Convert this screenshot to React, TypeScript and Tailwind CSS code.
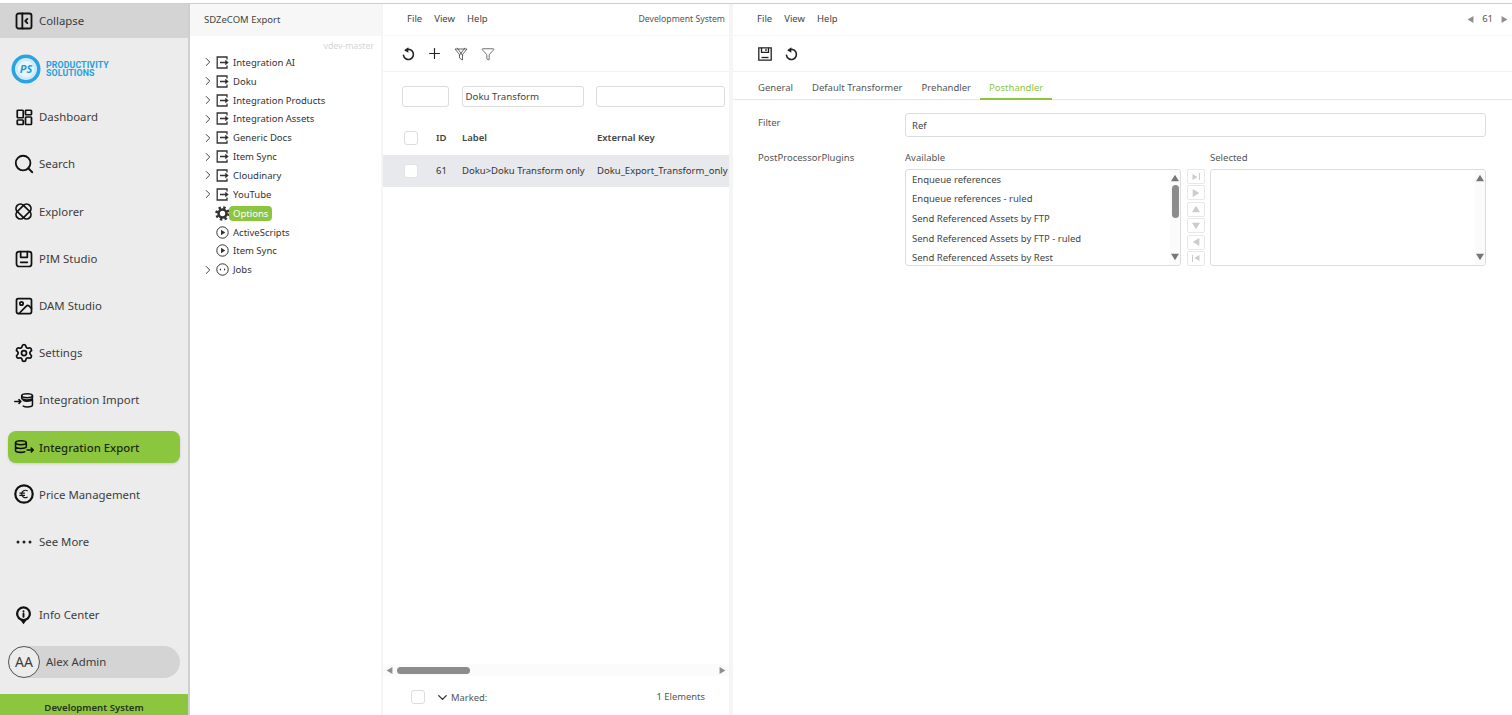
import React from "react";
import { ChevronRight, ChevronDown, Search, Settings, Plus, Funnel, Image } from "lucide-react";

const Sv = ({ s = 20, sw = 1.8, children }: { s?: number; sw?: number; children: React.ReactNode }) => (
  <svg width={s} height={s} viewBox="0 0 24 24" fill="none" stroke="currentColor" strokeWidth={sw} strokeLinecap="round" strokeLinejoin="round">{children}</svg>
);

const CollapseI = () => <Sv s={20} sw={2.2}><rect x="3" y="3" width="18" height="18" rx="2.5" /><path d="M10 3v18M16 9.500 13.500 12l2.500 2.500" /></Sv>;
const DashI = () => <Sv s={18} sw={2.3}><rect x="3" y="3" width="8" height="10" rx="1" /><rect x="14" y="3" width="8" height="6" rx="1" /><rect x="3" y="16" width="8" height="6" rx="1" /><rect x="14" y="12" width="8" height="10" rx="1" /></Sv>;
const ExplorerI = () => <Sv s={21} sw={2}><rect x="2" y="7" width="20" height="10" rx="5" transform="rotate(45 12 12)" /><rect x="2" y="7" width="20" height="10" rx="5" transform="rotate(-45 12 12)" /></Sv>;
const PimI = () => <Sv s={20} sw={2.1}><rect x="3" y="3" width="18" height="18" rx="3" /><path d="M8 3v7h8V3M8 16h8" /></Sv>;
const DotsI = () => (
  <svg width="16" height="4" viewBox="0 0 16 4" fill="#222"><circle cx="2" cy="2" r="1.500" /><circle cx="8" cy="2" r="1.500" /><circle cx="14" cy="2" r="1.500" /></svg>
);
const DbI = ({ flip }: { flip?: boolean }) => flip ? (
  <svg width="20" height="16" viewBox="0 0 26 20" fill="none" stroke="currentColor" strokeWidth="2" strokeLinecap="round" strokeLinejoin="round">
    <path d="M1 12h8M6.500 9.500 9 12l-2.500 2.500" />
    <ellipse cx="17" cy="4.500" rx="7" ry="2.500" /><path d="M10 4.500v3c0 1 2 2.500 7 2.500s7-1.500 7-2.500v-3M12 10.500c1.500.8 3 1 5 1s5.500-.5 7-2v7c0 1.500-3 2.500-7 2.500-2 0-3.500-.3-5-1" />
  </svg>
) : (
  <svg width="20" height="16" viewBox="0 0 26 20" fill="none" stroke="currentColor" strokeWidth="2" strokeLinecap="round" strokeLinejoin="round">
    <ellipse cx="9" cy="4.500" rx="7" ry="2.500" /><path d="M2 4.500v10c0 1.500 3 2.500 7 2.500 2 0 3.500-.2 5-.8M2 9.500c0 1.500 3 2.500 7 2.500s7-1 7-2.500v-5" />
    <path d="M17 14h8M22.500 11.500 25 14l-2.500 2.500" />
  </svg>
);
const EuroI = () => <Sv s={22} sw={2.4}><circle cx="12" cy="12" r="9.500" /><path d="M15.500 8.500a4 4 0 0 0-6 3.500 4 4 0 0 0 6 3.500M7.500 11h5M7.500 13.500h5" strokeWidth="1.300" /></Sv>;
const InfoI = () => <Sv s={21} sw={2.2}><path d="M12 23 9 19a8.500 8.500 0 1 1 6 0z" fill="currentColor" stroke="none" /><circle cx="12" cy="11" r="6" fill="#ececec" stroke="none" /><path d="M12 8.300v.2M12 11v3.500" /></Sv>;

const ExportI = () => (
  <svg width="13" height="13" viewBox="0 0 13 13" fill="none" stroke="currentColor" strokeWidth="1.300" className="shrink-0">
    <path d="M11 3.500V1H1.200v11H11V9.500" /><path d="M4 6.500h7.500M9.300 4.500 11.500 6.500 9.300 8.500" strokeWidth="1.500" />
  </svg>
);
const CircleI = ({ dots }: { dots?: boolean }) => (
  <svg width="13" height="13" viewBox="0 0 13 13" className="shrink-0">
    <circle cx="6.500" cy="6.500" r="5.700" fill="none" stroke="currentColor" strokeWidth="1" />
    {dots ? <path d="M3.500 6.500l1.500-1.300v2.600zM9.500 6.500 8 5.200v2.600z" fill="currentColor" /> : <path d="M5 3.800 9.300 6.500 5 9.200z" fill="currentColor" />}
  </svg>
);
const GearI = () => (
  <svg width="15" height="15" viewBox="0 0 14 14" fill="none" stroke="#333" className="shrink-0">
    <circle cx="7" cy="7" r="5.600" strokeWidth="2.400" strokeDasharray="2.200 2.200" />
    <circle cx="7" cy="7" r="3.700" strokeWidth="2.400" />
  </svg>
);
const RefreshI = () => (
  <svg width="13" height="14" viewBox="0 0 13 14" fill="none" className="shrink-0">
    <path d="M3.600 3.300A5 5 0 1 1 1.500 8.300" stroke="#222" strokeWidth="1.600" strokeLinecap="round" />
    <path d="M6.300 .3v5.400L2.400 3.300z" fill="#222" />
  </svg>
);
const SaveI = () => (
  <svg width="14" height="14" viewBox="0 0 14 14" fill="none" stroke="#222" strokeWidth="1.300" className="shrink-0">
    <path d="M.8.800h12.400v12.400H.8z" /><path d="M3.500 .8v4.500h7V.8M8 2v2" /><path d="M3.500 10.500h7" />
  </svg>
);
const FilterOff = () => (
  <svg width="14" height="14" viewBox="0 0 14 14" fill="none" stroke="#555" strokeWidth=".9"><path d="M1 2h12L8.500 7.500V13L5.500 11V7.500zM3 .8l6 8.200M11 .8 5 9" /></svg>
);
const Tri = ({ d, c = "#8f8f8f", s = 6 }: { d: "u" | "d" | "l" | "r"; c?: string; s?: number }) => {
  const m = { u: "3,0.500 6,5.500 0,5.500", d: "0,0.500 6,0.500 3,5.500", l: "5.500,0 5.500,6 0.500,3", r: "0.500,0 0.500,6 5.500,3" }[d];
  return <svg width={s} height={s} viewBox="0 0 6 6" className="shrink-0"><polygon points={m} fill={c} /></svg>;
};

const nav: [string, React.ReactNode][] = [
  ["Dashboard", <DashI />],
  ["Search", <Search size={22} strokeWidth={2} />],
  ["Explorer", <ExplorerI />],
  ["PIM Studio", <PimI />],
  ["DAM Studio", <Image size={20} strokeWidth={2.1} />],
  ["Settings", <Settings size={20} strokeWidth={2.1} />],
  ["Integration Import", <DbI flip />],
  ["Integration Export", <DbI />],
  ["Price Management", <EuroI />],
  ["See More", <DotsI />],
];

const NavRow = ({ label, icon, active }: { label: string; icon: React.ReactNode; active?: boolean }) => (
  <div className="flex h-[47.2px] shrink-0 items-center px-2">
    <div className={`flex h-[32px] w-[172px] items-center rounded-lg ${active ? "bg-[#8cc63f] font-medium text-[#1c2a10] shadow-sm" : "text-[#3c3c3c]"}`}>
      <div className="flex w-[31px] shrink-0 justify-center text-[#111]">{icon}</div>
      <span className="text-[11.4px] leading-none">{label}</span>
    </div>
  </div>
);

const Sidebar = () => (
  <aside className="flex h-full w-[190px] shrink-0 flex-col border-r-2 border-[#cfcfcf] bg-[#ececec]">
    <div className="flex h-[34px] shrink-0 items-center bg-[#d4d4d4] pl-2 text-[#3c3c3c]">
      <div className="flex w-[31px] justify-center text-[#111]"><CollapseI /></div>
      <span className="text-[11.4px] leading-[16px]">Collapse</span>
    </div>
    <div className="flex h-[55.4px] shrink-0 items-center pl-[11px] pt-[7px]">
      <svg width="30" height="30" viewBox="0 0 30 30" className="shrink-0">
        <circle cx="15" cy="15" r="14.500" fill="#29a3e2" />
        <circle cx="15" cy="15" r="11" fill="#cfeafa" />
        <circle cx="15" cy="15" r="8" fill="#e9f6fd" />
        <text x="15" y="19" textAnchor="middle" fontSize="11" fontWeight="700" fontStyle="italic" fontFamily="'Noto Sans', sans-serif" fill="#1d9be0">PS</text>
      </svg>
      <div className="ml-[5px] font-['Roboto',sans-serif] text-[8.8px] font-bold leading-[8px] tracking-[0.1px] text-[#1da1e2]">
        <div>PRODUCTIVITY</div>
        <div>SOLUTIONS</div>
      </div>
    </div>
    {nav.map(([l, i]) => <NavRow key={l} label={l} icon={i} active={l === "Integration Export"} />)}
    <div className="h-[25.8px] shrink-0" />
    <NavRow label="Info Center" icon={<InfoI />} />
    <div className="flex h-[47.2px] shrink-0 items-center px-2">
      <div className="flex h-[32px] w-[172px] items-center rounded-full bg-[#d4d4d4] text-[#3c3c3c]">
        <div className="flex h-[32px] w-[32px] shrink-0 items-center justify-center rounded-full border border-[#555] bg-[#ececec] text-[14px]">AA</div>
        <span className="ml-[6px] text-[11.4px] leading-none">Alex Admin</span>
      </div>
    </div>
    <div className="mt-auto flex h-[21px] shrink-0 items-end justify-center bg-[#8cc63f] text-[9.6px] font-semibold leading-[14px] text-[#26331a]">Development System</div>
  </aside>
);

const tree: { l: string; t: "e" | "g" | "p" | "j"; c?: boolean; sel?: boolean }[] = [
  { l: "Integration AI", t: "e", c: true },
  { l: "Doku", t: "e", c: true },
  { l: "Integration Products", t: "e", c: true },
  { l: "Integration Assets", t: "e", c: true },
  { l: "Generic Docs", t: "e", c: true },
  { l: "Item Sync", t: "e", c: true },
  { l: "Cloudinary", t: "e", c: true },
  { l: "YouTube", t: "e", c: true },
  { l: "Options", t: "g", sel: true },
  { l: "ActiveScripts", t: "p" },
  { l: "Item Sync", t: "p" },
  { l: "Jobs", t: "j", c: true },
];

const TreePanel = () => (
  <section className="flex h-full w-[193px] shrink-0 flex-col border-r-2 border-[#f5f5f5] bg-white">
    <div className="flex h-[32px] shrink-0 items-center bg-[#f7f7f7] pl-[14px] text-[9.5px] text-[#444]">SDZeCOM Export</div>
    <div className="flex h-[17px] items-end justify-end pr-[7px] text-[8.7px] leading-[14px] text-[#d4d4d4]">vdev-master</div>
    <div className="flex flex-col pl-[14px]">
      {tree.map((r, i) => (
        <div key={i} className="flex h-[18.85px] items-center text-[#333]">
          <div className="flex w-[11px] shrink-0 justify-start">{r.c && <ChevronRight size={14} strokeWidth={1.6} className="-ml-[3px] text-[#333]" />}</div>
          <div className="flex w-[15px] shrink-0 justify-center">
            {r.t === "e" && <ExportI />}
            {r.t === "g" && <GearI />}
            {r.t === "p" && <CircleI />}
            {r.t === "j" && <CircleI dots />}
          </div>
          <span className={`text-[9.5px] leading-[15px] ${r.sel ? "-ml-[1px] rounded-sm bg-[#8cc63f] px-[4px] text-white" : "ml-[3px]"}`}>{r.l}</span>
        </div>
      ))}
    </div>
  </section>
);

const Menu = () => (
  <div className="flex gap-[12px] text-[9.5px] text-[#444]"><span>File</span><span>View</span><span>Help</span></div>
);

const Box = ({ className = "", children }: { className?: string; children?: React.ReactNode }) => (
  <div className={`rounded-[3px] border border-[#dcdcdc] bg-white ${className}`}>{children}</div>
);

const Tool = ({ children }: { children: React.ReactNode }) => (
  <div className="flex w-[26.5px] shrink-0 justify-center">{children}</div>
);

const ListPanel = () => (
  <section className="flex h-full w-[346px] shrink-0 flex-col bg-white">
    <div className="flex h-[32px] shrink-0 items-center justify-between border-b border-[#f7f7f7] pl-[24px] pr-[4px]">
      <Menu />
      <span className="text-[8.7px] text-[#555]">Development System</span>
    </div>
    <div className="flex h-[36px] shrink-0 items-center border-b border-[#f3f3f3] pl-[12px] text-[#222]">
      <Tool><RefreshI /></Tool>
      <Tool><Plus size={17} strokeWidth={1.6} /></Tool>
      <Tool><FilterOff /></Tool>
      <Tool><Funnel size={14} strokeWidth={1.1} /></Tool>
    </div>
    <div className="flex shrink-0 gap-[12.5px] pl-[19px] pt-[14px]">
      <Box className="h-[21px] w-[47px]" />
      <Box className="flex h-[21px] w-[122px] items-center pl-[3px] pt-[1px] text-[9.7px] text-[#444]">Doku Transform</Box>
      <Box className="h-[21px] w-[129px]" />
    </div>
    <div className="flex h-[48px] shrink-0 items-end whitespace-nowrap pb-[9px] text-[9.5px] font-semibold leading-[16px] text-[#444]">
      <span className="mb-[1px] ml-[21px] block h-[14px] w-[14px] shrink-0 rounded-[3px] border border-[#ddd] bg-white" />
      <span className="ml-[18px] w-[26px] shrink-0">ID</span>
      <span className="w-[135px] shrink-0">Label</span>
      <span>External Key</span>
    </div>
    <div className="flex h-[32px] shrink-0 items-center whitespace-nowrap bg-[#e8e9ec] text-[9.5px] text-[#333]">
      <span className="ml-[21px] block h-[14px] w-[14px] shrink-0 rounded-[3px] border border-[#e3e3e3] bg-white" />
      <span className="ml-[18px] w-[26px] shrink-0">61</span>
      <span className="w-[135px] shrink-0">Doku&gt;Doku Transform only</span>
      <span>Doku_Export_Transform_only</span>
    </div>
    <div className="flex-1" />
    <div className="flex h-[12px] shrink-0 items-center justify-between bg-[#fbfbfb] px-[3px]">
      <Tri d="l" s={7} />
      <div className="ml-[4px] mr-auto h-[7px] w-[73px] rounded-full bg-[#8c8c8c]" />
      <Tri d="r" s={7} />
    </div>
    <div className="flex h-[39px] shrink-0 items-start pt-[14px] text-[#555]">
      <span className="ml-[28px] block h-[14px] w-[14px] shrink-0 rounded-[3px] border border-[#ddd] bg-white" />
      <ChevronDown size={15} strokeWidth={2.2} className="ml-[10px] text-[#333]" />
      <span className="ml-[1px] text-[9.4px] leading-[15px]">Marked:</span>
      <span className="ml-auto mr-[24px] text-[9.4px] leading-[13px]">1 Elements</span>
    </div>
  </section>
);

const items = ["Enqueue references", "Enqueue references - ruled", "Send Referenced Assets by FTP", "Send Referenced Assets by FTP - ruled", "Send Referenced Assets by Rest"];
const Bar = ({ thumb }: { thumb?: boolean }) => (
  <div className="flex w-[10px] shrink-0 flex-col items-center justify-between bg-[#fbfbfb] py-[4px]">
    <Tri d="u" c="#777" s={8} />
    {thumb && <div className="mb-auto mt-[3px] h-[33px] w-[7px] rounded-full bg-[#8c8c8c]" />}
    <Tri d="d" c="#777" s={8} />
  </div>
);

const MoveBtn = ({ children }: { children: React.ReactNode }) => (
  <div className="flex h-[15px] w-[18px] items-center justify-center rounded-[2px] border border-[#e8e8e8] bg-white">{children}</div>
);

const DetailPanel = () => (
  <section className="flex h-full flex-1 flex-col border-l-4 border-[#f5f5f5] bg-white">
    <div className="flex h-[32px] shrink-0 items-center justify-between border-b border-[#f7f7f7] pl-[24px] pr-[4px]">
      <Menu />
      <div className="flex items-center gap-[8px] text-[9.5px] text-[#555]"><Tri d="l" s={7} /><span>61</span><Tri d="r" s={7} /></div>
    </div>
    <div className="flex h-[36px] shrink-0 items-center border-b border-[#f3f3f3] pl-[19px] text-[#222]">
      <Tool><SaveI /></Tool>
      <Tool><RefreshI /></Tool>
    </div>
    <div className="flex h-[28px] shrink-0 items-stretch border-b border-[#e6e6e6] pl-[25px] text-[9.5px] text-[#555]">
      <span className="mr-[19px] flex items-center pt-[5px]">General</span>
      <span className="mr-[19px] flex items-center pt-[5px]">Default Transformer</span>
      <span className="mr-[9px] flex items-center pt-[5px]">Prehandler</span>
      <span className="-mb-px flex items-center border-b-2 border-[#8cc63f] px-[9px] pt-[7px] text-[#8cc63f]">Posthandler</span>
    </div>
    <div className="grid grid-cols-[147px_1fr] pl-[25px] pr-[26px] pt-[13px] text-[9.5px] text-[#555]">
      <span className="leading-[20px]">Filter</span>
      <Box className="flex h-[24px] items-center pl-[6px] pt-[2px] text-[#444]">Ref</Box>
      <span className="pt-[13px] leading-[16px]">PostProcessorPlugins</span>
      <div className="pt-[13px]">
        <div className="grid grid-cols-[276px_29px_1fr] leading-[16px]">
          <span>Available</span><span /><span>Selected</span>
        </div>
        <div className="grid grid-cols-[276px_29px_1fr] pt-[3px]">
          <Box className="flex h-[97px] overflow-hidden text-[#444]">
            <div className="flex flex-1 flex-col pl-[6px]">
              {items.map((t) => <div key={t} className="flex h-[19.7px] shrink-0 items-center">{t}</div>)}
            </div>
            <Bar thumb />
          </Box>
          <div className="flex flex-col items-center justify-between">
            <MoveBtn><span className="flex items-center gap-[1px]"><Tri d="r" c="#ccc" s={6} /><span className="h-[7px] w-[1px] bg-[#ccc]" /></span></MoveBtn>
            <MoveBtn><Tri d="r" c="#ccc" s={8} /></MoveBtn>
            <MoveBtn><Tri d="u" c="#ccc" s={8} /></MoveBtn>
            <MoveBtn><Tri d="d" c="#ccc" s={8} /></MoveBtn>
            <MoveBtn><Tri d="l" c="#ccc" s={8} /></MoveBtn>
            <MoveBtn><span className="flex items-center gap-[1px]"><span className="h-[7px] w-[1px] bg-[#ccc]" /><Tri d="l" c="#ccc" s={6} /></span></MoveBtn>
          </div>
          <Box className="flex h-[97px] justify-end overflow-hidden"><Bar /></Box>
        </div>
      </div>
    </div>
  </section>
);

export default function App() {
  return (
    <div className="h-[715px] w-[1512px] overflow-hidden bg-white pt-[3px] font-['Noto_Sans',sans-serif]">
      <div className="flex h-[712px] border-t border-[#cfcfcf]">
        <Sidebar />
        <TreePanel />
        <ListPanel />
        <DetailPanel />
      </div>
    </div>
  );
}
